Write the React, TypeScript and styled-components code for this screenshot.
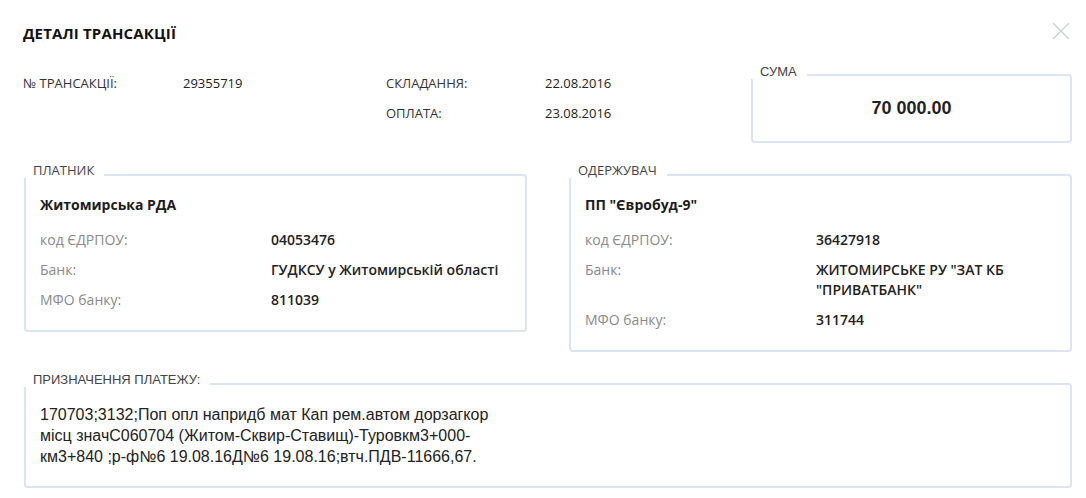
import styled, { createGlobalStyle } from 'styled-components';

const GlobalStyle = createGlobalStyle`
  body {
    margin: 0;
    background: #ffffff;
    font-family: 'Open Sans', 'Noto Sans', sans-serif;
    color: #222222;
  }
`;

type IRow = { label: string; value: string };

type IParty = {
  title: string;
  name: string;
  rows: IRow[];
};

const payer: IParty = {
  title: 'ПЛАТНИК',
  name: 'Житомирська РДА',
  rows: [
    { label: 'код ЄДРПОУ:', value: '04053476' },
    { label: 'Банк:', value: 'ГУДКСУ у Житомирській області' },
    { label: 'МФО банку:', value: '811039' },
  ],
};

const receiver: IParty = {
  title: 'ОДЕРЖУВАЧ',
  name: 'ПП "Євробуд-9"',
  rows: [
    { label: 'код ЄДРПОУ:', value: '36427918' },
    { label: 'Банк:', value: 'ЖИТОМИРСЬКЕ РУ "ЗАТ КБ "ПРИВАТБАНК"' },
    { label: 'МФО банку:', value: '311744' },
  ],
};

const CloseIcon = () => (
  <svg width="18" height="18" viewBox="0 0 18 18" fill="none">
    <path d="M1 1L17 17M17 1L1 17" stroke="#c9d0dc" strokeWidth="1.4" />
  </svg>
);

const PartyCard = ({ title, name, rows }: IParty) => (
  <Panel>
    <Legend>{title}</Legend>
    <PartyName>{name}</PartyName>
    <PartyGrid>
      {rows.map((r) => (
        <Pair key={r.label}>
          <PartyLabel>{r.label}</PartyLabel>
          <PartyValue>{r.value}</PartyValue>
        </Pair>
      ))}
    </PartyGrid>
  </Panel>
);

export default function App() {
  return (
    <>
      <GlobalStyle />
      <Wrapper>
        <Header>
          <Title>ДЕТАЛІ ТРАНСАКЦІЇ</Title>
          <CloseButton aria-label="close">
            <CloseIcon />
          </CloseButton>
        </Header>

        <TopSection>
          <InfoGrid>
            <InfoLabel>№ ТРАНСАКЦІЇ:</InfoLabel>
            <InfoValue>29355719</InfoValue>
            <InfoLabel>СКЛАДАННЯ:</InfoLabel>
            <InfoValue>22.08.2016</InfoValue>
            <InfoLabel />
            <InfoValue />
            <InfoLabel>ОПЛАТА:</InfoLabel>
            <InfoValue>23.08.2016</InfoValue>
          </InfoGrid>
          <SumPanel>
            <Legend $arial>СУМА</Legend>
            <Amount>70 000.00</Amount>
          </SumPanel>
        </TopSection>

        <Parties>
          <PartyCard {...payer} />
          <PartyCard {...receiver} />
        </Parties>

        <PurposePanel>
          <Legend $arial $top={-13}>
            ПРИЗНАЧЕННЯ ПЛАТЕЖУ:
          </Legend>
          <PurposeText>
            170703;3132;Поп опл напридб мат Кап рем.автом дорзагкор місц
            значС060704 (Житом-Сквир-Ставищ)-Туровкм3+000-км3+840 ;р-ф№6
            19.08.16Д№6 19.08.16;втч.ПДВ-11666,67.
          </PurposeText>
        </PurposePanel>
      </Wrapper>
    </>
  );
}

const Wrapper = styled.div`
  padding: 0 14px 12px 24px;
`;

const Header = styled.div`
  display: flex;
  justify-content: space-between;
  align-items: center;
  padding-top: 23px;
`;

const Title = styled.h1`
  margin: 0 0 0 -1px;
  font-size: 15px;
  line-height: 20px;
  font-weight: 700;
  letter-spacing: 0.15px;
  color: #111111;
`;

const CloseButton = styled.button`
  display: flex;
  padding: 0;
  margin: -4px 2px 0 0;
  border: none;
  background: none;
  cursor: pointer;
`;

const TopSection = styled.div`
  display: flex;
  align-items: flex-start;
  margin-top: 25px;
`;

const InfoGrid = styled.div`
  flex: 1;
  display: grid;
  grid-template-columns: 160px 203px 159px 1fr;
  grid-auto-rows: 30px;
  align-items: center;
  margin-left: -1px;
`;

const InfoLabel = styled.div`
  font-size: 13px;
  color: #333333;
`;

const InfoValue = styled.div`
  font-size: 13px;
  color: #222222;
`;

const Panel = styled.div`
  position: relative;
  border: 2px solid #dce4f2;
  border-radius: 4px;
  padding: 18px 14px 20px;
  background: #ffffff;
`;

const Legend = styled.span<{ $arial?: boolean; $top?: number }>`
  position: absolute;
  left: -2px;
  top: ${({ $top, $arial }) => ($top ?? ($arial ? -12 : -14))}px;
  padding: 0 10px 0 9px;
  background: #ffffff;
  font-family: ${({ $arial }) =>
    $arial ? "'Liberation Sans', Arial, sans-serif" : "'Open Sans', sans-serif"};
  font-size: 13px;
  line-height: ${({ $arial }) => ($arial ? 15 : 16)}px;
  color: #444444;
  white-space: nowrap;
`;

const SumPanel = styled(Panel)`
  width: 321px;
  box-sizing: border-box;
  height: 69px;
  margin-top: 6px;
  padding: 0;
  display: flex;
  align-items: center;
  justify-content: center;
`;

const Amount = styled.div`
  font-family: 'Liberation Sans', Arial, sans-serif;
  font-weight: 700;
  font-size: 18px;
  color: #222222;
`;

const Parties = styled.div`
  display: flex;
  align-items: flex-start;
  gap: 42px;
  margin-top: 31px;

  & > * {
    flex: 1;
  }
`;

const PartyName = styled.div`
  font-size: 14px;
  line-height: 22px;
  font-weight: 700;
  color: #1c1c1c;
`;

const PartyGrid = styled.div`
  display: flex;
  flex-direction: column;
  gap: 10px;
  margin-top: 14px;
`;

const Pair = styled.div`
  display: grid;
  grid-template-columns: 231px 1fr;
`;

const PartyLabel = styled.div`
  font-size: 14px;
  line-height: 20px;
  color: #8a8a8a;
`;

const PartyValue = styled.div`
  font-size: 14px;
  line-height: 20px;
  font-weight: 600;
  color: #222222;
`;

const PurposePanel = styled(Panel)`
  margin-top: 31px;
  padding: 19px 14px 19px;
`;

const PurposeText = styled.p`
  margin: 0;
  width: 470px;
  font-family: 'Liberation Sans', Arial, sans-serif;
  font-size: 16px;
  line-height: 21px;
  color: #222222;
`;
